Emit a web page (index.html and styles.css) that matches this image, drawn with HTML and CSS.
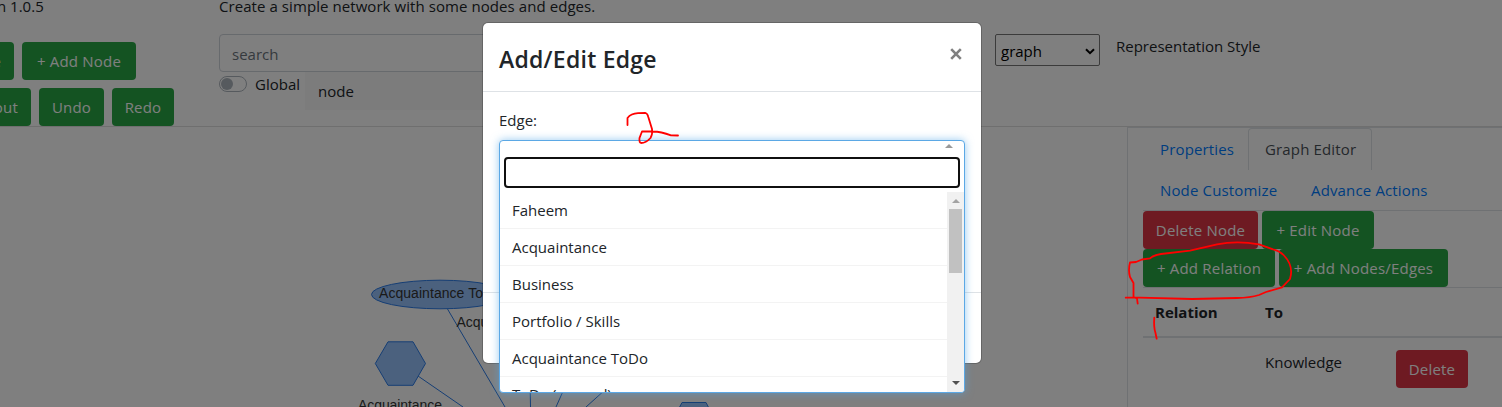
FILE: index.html
```html
<!DOCTYPE html>
<html lang="en">
<head>
<meta charset="utf-8">
<title>Add/Edit Edge</title>
<link rel="stylesheet" href="styles.css">
</head>
<body>
<div class="page">
  <header class="top">
    <div class="tools">
      <div class="version">n 1.0.5</div>
      <div class="tool-row">
        <button class="btn green cut w14">e</button>
        <button class="btn green w114">+ Add Node</button>
      </div>
      <div class="tool-row">
        <button class="btn green cut w31">out</button>
        <button class="btn green w65">Undo</button>
        <button class="btn green w62">Redo</button>
      </div>
    </div>
    <div class="finder">
      <div class="intro">Create a simple network with some nodes and edges.</div>
      <div class="search">search</div>
      <div class="scope">
        <span class="switch"></span>
        <span class="scope-label">Global</span>
        <div class="scope-item">node</div>
      </div>
    </div>
    <div class="style-pick">
      <div class="select"><span>graph</span>
        <svg width="10" height="7" viewBox="0 0 10 7"><path d="M1 1.2 5 5.2 9 1.2" fill="none" stroke="#000" stroke-width="2"/></svg>
      </div>
      <span class="style-label">Representation Style</span>
    </div>
  </header>
  <main class="work">
    <div class="canvas">
      <svg width="1127" height="280" viewBox="0 127 1127 280" font-family="Liberation Sans, Arial, sans-serif" font-size="14" fill="#343434">
        <g stroke="#2b7ce9" stroke-width="1">
          <path d="M447.500 309 505 407M418 376 463 407M530 380 530.500 407M568 380 556 407M616 380 586 407" fill="none"/>
          <ellipse cx="440" cy="294.500" rx="68.500" ry="14.300" fill="#97c2fc"/>
          <path d="M375.300 363.500 388 341.800H413L425.500 363.500 413 385.300H388Z" fill="#97c2fc"/>
          <path d="M676 414 682 402.500H706L712 414Z" fill="#97c2fc"/>
        </g>
        <text x="379" y="298" textLength="122">Acquaintance ToDo</text>
        <text x="456.500" y="327">Acqu</text>
        <text x="358" y="410" textLength="84">Acquaintance</text>
      </svg>
    </div>
    <aside class="panel">
      <nav class="tabs">
        <div class="tab-row"><a class="tab w105">Properties</a><a class="tab active">Graph Editor</a></div>
        <div class="tab-row second"><a class="tab w151">Node Customize</a><a class="tab">Advance Actions</a></div>
      </nav>
      <div class="actions"><button class="btn red w115">Delete Node</button><button class="btn green w112">+ Edit Node</button></div>
      <div class="actions"><button class="btn green w132">+ Add Relation</button><button class="btn green w169">+ Add Nodes/Edges</button></div>
      <div class="relations head"><span>Relation</span><span>To</span></div>
      <div class="relations row"><span></span><span>Knowledge</span><button class="btn red w72">Delete</button></div>
    </aside>
  </main>
</div>
<div class="overlay">
  <section class="modal">
    <div class="modal-head"><h2>Add/Edit Edge</h2>
      <svg class="close" width="12" height="12" viewBox="0 0 12 12"><path d="M1.200 1.200 10.800 10.800M10.800 1.200 1.200 10.800" stroke="#808080" stroke-width="2.600"/></svg>
    </div>
    <div class="modal-body">
      <label class="edge-label">Edge:</label>
      <div class="dropdown">
        <div class="chosen"><svg width="8" height="4" viewBox="0 0 8 4"><path d="M0 4 4 0 8 4Z" fill="#999"/></svg></div>
        <div class="filter"></div>
        <div class="list">
          <ul class="options">
            <li>Faheem</li><li>Acquaintance</li><li>Business</li><li>Portfolio / Skills</li><li>Acquaintance ToDo</li><li class="last">ToDo (general)</li>
          </ul>
          <div class="scrollbar">
            <svg width="8" height="4" viewBox="0 0 8 4"><path d="M0 4 4 0 8 4Z" fill="#a3a3a3"/></svg>
            <div class="thumb"></div>
            <svg width="8" height="4" viewBox="0 0 8 4"><path d="M0 0 4 4 8 0Z" fill="#505050"/></svg>
          </div>
        </div>
      </div>
    </div>
    <div class="modal-foot"></div>
  </section>
</div>
<svg class="ink" width="1502" height="407" viewBox="0 0 1502 407">
  <path d="M627.500 125V118Q631 113.500 638 113.200L645.500 113Q647.500 113.500 648.300 117L652 129Q652.800 134 650.500 138Q646 143 641 143Q639 142.500 639.500 138L642 131.500H653Q661 131.800 671 135.300L678 135.500"/>
  <path d="M1125.700 297.700H1140L1192 299 1237 298Q1250 297.800 1259 295L1266 292 1282 287.300 1290 279Q1294 266 1284 255.500Q1280 251 1273 249.300L1259 244.300Q1237 240.500 1217 244.300L1190 250.700 1161 254Q1153 255.500 1150 258.300L1142 259.500 1136 262 1130 262.500Q1128 270 1130 277L1133.500 283V297L1137 298.500 1137.700 303.700"/>
  <path d="M1154.300 317.700Q1153.500 327 1155.500 333L1156.700 338.700"/>
</svg>
</body>
</html>
```
FILE: styles.css
```css
* { box-sizing: border-box; }
body {
  margin: 0; width: 1502px; height: 407px; overflow: hidden; background: #fff; color: #212529;
  font: 15px/24px "Open Sans", "Noto Sans", sans-serif;
}
button { font: inherit; }
.page { width: 1502px; height: 407px; overflow: hidden; }
.top { display: flex; height: 127px; border-bottom: 1px solid #dfdfdf; }
.tools { width: 219px; display: flex; flex-direction: column; gap: 8px; }
.version { height: 34px; line-height: 12px; white-space: nowrap; margin-left: -3px; }
.tool-row { display: flex; gap: 8px; }
.btn { height: 38px; border: 0; border-radius: 4px; color: #fff; padding: 0; text-align: center; white-space: nowrap; line-height: 38px; flex: none; letter-spacing: .2px; }
.green { background: #28a745; }
.red { background: #dc3545; }
.cut { border-radius: 0 4px 4px 0; display: flex; justify-content: flex-end; padding-right: 13px; overflow: hidden; }
.w14 { width: 14px; } .w31 { width: 31px; } .w62 { width: 62px; } .w65 { width: 65px; }
.w72 { width: 72px; } .w112 { width: 112px; } .w114 { width: 114px; } .w115 { width: 115px; }
.w132 { width: 132px; } .w169 { width: 169px; }
.finder { width: 776px; }
.intro { height: 34px; line-height: 12px; letter-spacing: .07px; }
.search { height: 38px; width: 600px; border: 1px solid #ced4da; border-radius: 4px; padding: 0 12px; line-height: 38px; color: #6c757d; }
.scope { display: flex; }
.switch { width: 28px; height: 16px; margin-top: 4px; border: 1px solid #adb5bd; border-radius: 8px; padding: 1px; }
.switch::before { content: ""; display: block; width: 12px; height: 12px; border-radius: 50%; background: #adb5bd; }
.scope-label { width: 50px; margin-left: 8px; line-height: 25px; }
.scope-item { width: 500px; height: 38px; background: #f8f8f8; padding-left: 13px; line-height: 39px; }
.style-pick { display: flex; padding-top: 34px; gap: 16px; }
.select { width: 105px; height: 32px; border: 1px solid #767676; border-radius: 2px; display: flex; align-items: center; justify-content: space-between; padding: 2px 4px 0 5px; color: #000; }
.style-label { line-height: 25px; }
.work { display: flex; height: 280px; }
.canvas { width: 1127px; }
.canvas svg { display: block; }
.panel { width: 375px; border-left: 1px solid #dee2e6; border-top: 1px solid #dee2e6; padding-left: 15px; }
.tabs { height: 83px; border-bottom: 1px solid #dee2e6; }
.tab-row { display: flex; height: 42px; }
.tab { padding: 0 17px; line-height: 43px; color: #007bff; white-space: nowrap; letter-spacing: .15px; }
.tab.active { width: 124px; color: #495057; border: 1px solid #dee2e6; border-bottom: 0; border-radius: 4px 4px 0 0; padding: 0 16px; line-height: 41px; }
.w105 { width: 105px; } .w151 { width: 151px; }
.second { height: 40px; }
.second .tab { line-height: 41px; }
.actions { display: flex; gap: 4px; height: 38px; }
.relations { display: grid; grid-template-columns: 110px 131px 1fr; padding: 12px 0 0 12px; border-top: 1px solid #dee2e6; }
.head { height: 51px; border-bottom: 2px solid #dee2e6; font-weight: 700; }
.row { border-top: 0; }
.overlay { position: absolute; inset: 0; background: rgba(0,0,0,.5); padding: 23px 0 0 483px; }
.modal { width: 498px; height: 340px; background: #fff; border-radius: 5px; box-shadow: 0 0 0 1px rgba(0,0,0,.2); display: flex; flex-direction: column; }
.modal-head { height: 69px; border-bottom: 1px solid #dee2e6; display: flex; justify-content: space-between; padding: 18px 19px 0 16px; }
h2 { margin: 0; font-size: 23px; line-height: 36px; font-weight: 600; letter-spacing: .25px; }
.close { margin-top: 7px; }
.modal-body { height: 200px; padding: 16px; }
.edge-label { display: block; height: 32px; line-height: 25px; }
.dropdown { position: relative; width: 466px; height: 253px; background: #fff; border: 1px solid #5ba8e5; border-radius: 4px; box-shadow: 0 0 8px rgba(81,167,232,.6); overflow: hidden; }
.chosen { height: 16px; display: flex; justify-content: flex-end; padding: 3px 11px 0 0; }
.filter { height: 31px; margin: 0 4px 4px; border: 2px solid #101010; border-radius: 4px; }
.list { display: flex; height: 200px; overflow: hidden; }
.options { flex: 1; margin: 0; padding: 0; list-style: none; }
.options li { height: 37px; padding-left: 12px; line-height: 37px; border-bottom: 1px solid #f3f3f3; }
.options .last { line-height: 35px; letter-spacing: -.2px; }
.scrollbar { width: 17px; background: #f1f1f1; display: flex; flex-direction: column; align-items: center; padding: 7px 0; }
.thumb { width: 13px; height: 64px; background: #c1c1c1; margin: 6px 0 auto; }
.modal-foot { flex: 1; border-top: 1px solid #dee2e6; }
.ink { position: absolute; left: 0; top: 0; fill: none; stroke: #f00; stroke-width: 1.8; stroke-linecap: round; stroke-linejoin: round; }
```
